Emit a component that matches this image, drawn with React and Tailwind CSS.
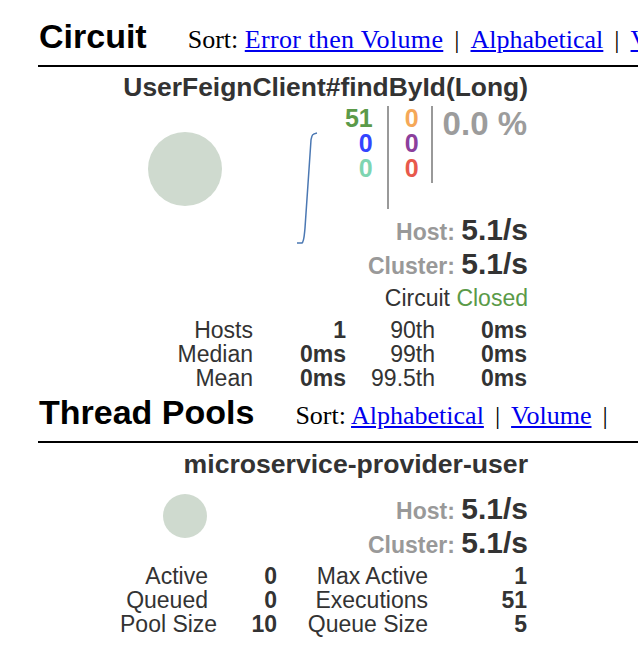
import React from 'react';

const sans = { fontFamily: '"Liberation Sans", Arial, sans-serif' };

// Section header: big title + sort links
const SectionHeader = ({ title, links, className = '' }) => (
  <div className={`ml-[38px] flex items-baseline whitespace-nowrap border-b-2 border-black pb-[12px] ${className}`}>
    <h2 className="text-[34px] leading-[34px] font-bold text-black pl-[1px]" style={sans}>{title}</h2>
    <span className="ml-[41px] text-[26px] leading-[26px] text-black font-['Liberation_Serif',serif]">
      Sort:{' '}
      {links.map((l) => (
        <React.Fragment key={l}>
          <a href="#" className={`text-[#0000ee] underline ${l === 'Error then Volume' ? 'tracking-[0.35px]' : ''}`}>{l}</a>
          <span className="mx-[11px] text-black">|</span>
        </React.Fragment>
      ))}
    </span>
  </div>
);

const Rate = ({ label, value, className = '' }) => (
  <div className={`text-right text-[30px] leading-[34px] whitespace-nowrap ${className}`}>
    <span className="text-[23px] leading-[26px] font-bold text-[#999]">{label} </span>
    <span className="font-bold text-[#333]">{value}</span>
  </div>
);

const Counters = () => (
  <div className="flex justify-end font-bold text-[25px] leading-[25px]">
    <div className="h-[103px] border-r-2 border-[#999] pr-[14px] text-right">
      <div className="text-[#5b9a49]">51</div>
      <div className="text-[#3344ff]">0</div>
      <div className="text-[#7ed5b1]">0</div>
    </div>
    <div className="h-[77px] border-r-2 border-[#999] pl-[16px] pr-[12px] text-right">
      <div className="text-[#f5a858]">0</div>
      <div className="text-[#8c3f9c]">0</div>
      <div className="text-[#e8594c]">0</div>
    </div>
    <div className="pl-[10px] pr-[1px] text-[33px] leading-[34px] text-[#9c9c9c] mt-[1px] whitespace-nowrap">0.0 %</div>
  </div>
);

const CircuitCard = () => (
  <div className="ml-[120px] w-[408px] pt-[6px] text-[#333]" style={sans}>
    <div className="text-right text-[26.4px] leading-[28px] font-bold whitespace-nowrap">UserFeignClient#findById(Long)</div>
    <div className="mt-[5px] flex">
      <svg width="210" height="150" className="shrink-0">
        <circle cx="65" cy="63" r="37" fill="#cfdacf" />
        <path
          d="M177 137 L182 137 C184 136 184 132 185 122 L191 34 C192 29 192 28 197 27"
          fill="none"
          stroke="#4b78b3"
          strokeWidth="1.5"
        />
      </svg>
      <div className="flex-1">
        <Counters />
        <Rate className="mt-[4px]" label="Host:" value="5.1/s" />
        <Rate label="Cluster:" value="5.1/s" />
      </div>
    </div>
    <div className="text-right text-[23px] leading-[34px]">
      Circuit <span className="text-[#5a9a48]">Closed</span>
    </div>
    <div className="mt-[3px] grid grid-cols-[133px_93px_89px_92px] text-right text-[23px] leading-[24px] whitespace-nowrap">
      <div>Hosts</div><div className="font-bold">1</div><div>90th</div><div className="font-bold">0ms</div>
      <div>Median</div><div className="font-bold">0ms</div><div>99th</div><div className="font-bold">0ms</div>
      <div>Mean</div><div className="font-bold">0ms</div><div>99.5th</div><div className="font-bold">0ms</div>
    </div>
  </div>
);

const ThreadCard = () => (
  <div className="ml-[120px] w-[408px] pt-[7px] text-[#333]" style={sans}>
    <div className="text-right text-[26.6px] leading-[28px] font-bold whitespace-nowrap">microservice-provider-user</div>
    <div className="mt-[10px] flex">
      <svg width="210" height="60" className="shrink-0">
        <circle cx="65" cy="28" r="22" fill="#cfdacf" />
      </svg>
      <div className="flex-1">
        <Rate className="mt-[4px]" label="Host:" value="5.1/s" />
        <Rate label="Cluster:" value="5.1/s" />
      </div>
    </div>
    <div className="mt-[4px] grid grid-cols-[88px_69px_151px_99px] text-right text-[23px] leading-[24px] whitespace-nowrap">
      <div>Active</div><div className="font-bold">0</div><div>Max Active</div><div className="font-bold">1</div>
      <div>Queued</div><div className="font-bold">0</div><div>Executions</div><div className="font-bold">51</div>
      <div>Pool Size</div><div className="font-bold">10</div><div>Queue Size</div><div className="font-bold">5</div>
    </div>
  </div>
);

export default function App() {
  return (
    <div className="w-[638px] h-[670px] overflow-hidden bg-white pt-[19px]">
      <SectionHeader title="Circuit" links={['Error then Volume', 'Alphabetical', 'Volume']} />
      <CircuitCard />
      <SectionHeader className="mt-[5px]" title="Thread Pools" links={['Alphabetical', 'Volume']} />
      <ThreadCard />
    </div>
  );
}
